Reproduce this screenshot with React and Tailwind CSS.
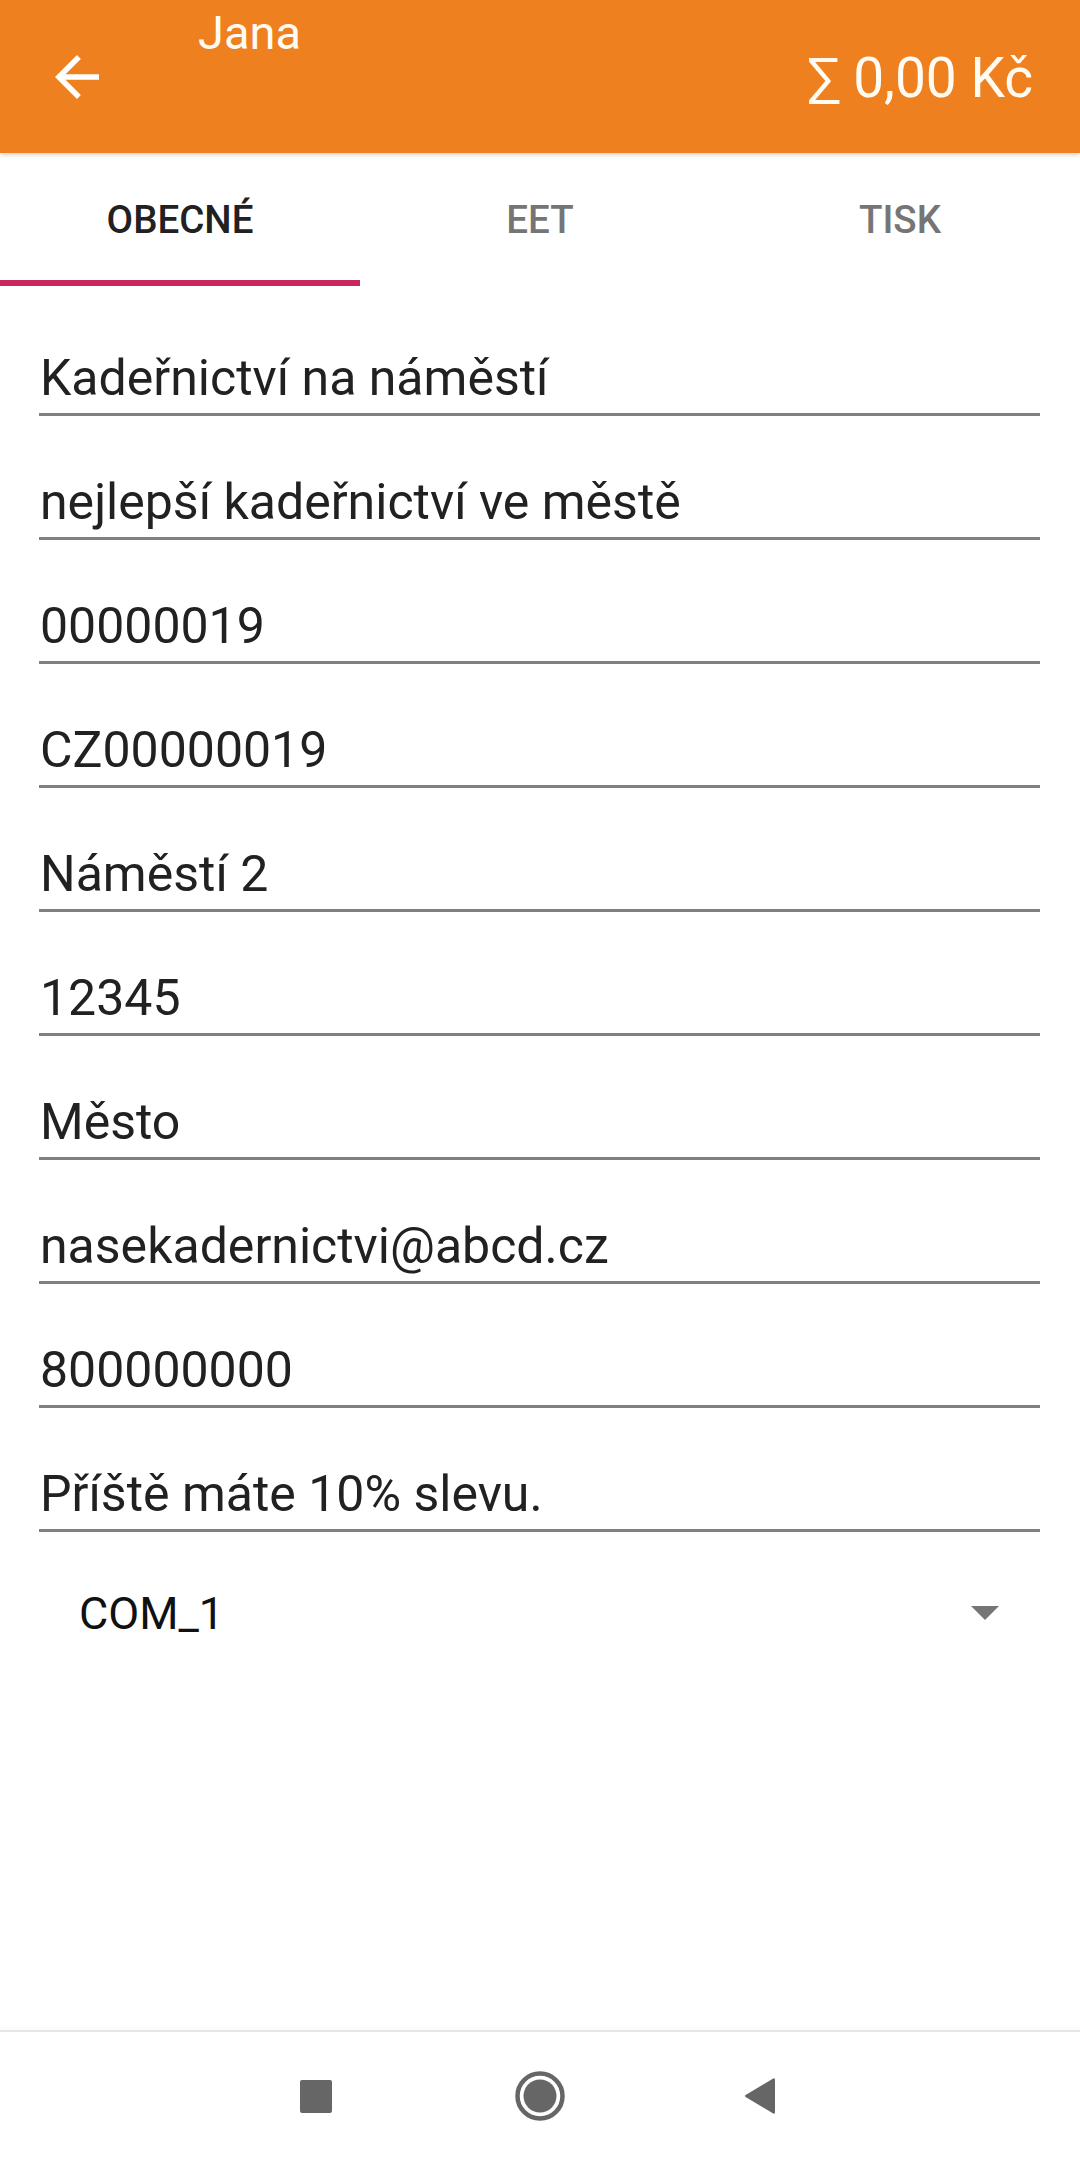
const fields = [
  'Kadeřnictví na náměstí',
  'nejlepší kadeřnictví ve městě',
  '00000019',
  'CZ00000019',
  'Náměstí 2',
  '12345',
  'Město',
  'nasekadernictvi@abcd.cz',
  '800000000',
  'Příště máte 10% slevu.',
]

const tabs = ['OBECNÉ', 'EET', 'TISK']

function Field({ value, first }) {
  return (
    <div className={`${first ? 'h-[130px]' : 'h-[124px]'} flex items-end border-b-[3px] border-[#808080]`}>
      <span className="pb-[5px] pl-[1px] text-[50px] leading-[60px] text-[#212121]">{value}</span>
    </div>
  )
}

export default function App() {
  return (
    <div className="flex h-[2160px] w-[1080px] flex-col bg-white font-['Roboto','Liberation_Sans',sans-serif]">
      {/* toolbar */}
      <header className="relative z-10 flex h-[153px] shrink-0 items-start bg-[#ee801f] pl-[44px] pr-[47px] text-white shadow-[0_2px_4px_rgba(0,0,0,0.18)]">
        <button type="button" className="mt-[44px] h-[66px] w-[66px]">
          <svg viewBox="0 0 24 24" className="h-[66px] w-[66px]" fill="white">
            <path d="M20 11H7.83l5.59-5.59L12 4l-8 8 8 8 1.41-1.41L7.83 13H20v-2z" />
          </svg>
        </button>
        <h1 className="ml-[88px] mt-[6px] text-[47px] leading-[54px] text-[#fffbf2]">Jana</h1>
        <div className="ml-auto mt-[46px] text-[55px] leading-[64px] text-[#fffbf2]">∑ 0,00 Kč</div>
      </header>

      {/* tabs */}
      <nav className="grid h-[133px] shrink-0 grid-cols-3">
        {tabs.map((t, i) => (
          <div key={t} className="relative flex items-center justify-center">
            <span className={`text-[38.5px] font-medium ${i === 0 ? 'text-[#212121]' : 'text-[#757575]'}`}>{t}</span>
            {i === 0 && <div className="absolute bottom-0 left-0 h-[6px] w-full bg-[#c9285d]" />}
          </div>
        ))}
      </nav>

      {/* form */}
      <div className="flex flex-col pl-[39px] pr-[40px]">
        {fields.map((f, i) => (
          <Field key={f} value={f} first={i === 0} />
        ))}
        <div className="flex items-center pl-[40px] pr-[41px] pt-[55px]">
          <span className="text-[45px] leading-[54px] text-[#111]">COM_1</span>
          <svg viewBox="0 0 28 14" className="ml-auto mt-[-2px] h-[14px] w-[28px]" fill="#757575">
            <path d="M0 0h28L14 14z" />
          </svg>
        </div>
      </div>

      <div className="flex-1" />

      {/* system navigation */}
      <div className="flex h-[130px] shrink-0 items-center justify-center border-t-2 border-[#e6e6e6] shadow-[0_-3px_4px_rgba(0,0,0,0.02)]">
        <div className="flex w-[224px] justify-center">
          <div className="h-[33px] w-[32px] rounded-[2px] bg-[#666]" />
        </div>
        <div className="flex w-[224px] justify-center">
          <svg viewBox="0 0 50 50" className="h-[50px] w-[50px]">
            <circle cx="25" cy="25" r="22.5" fill="none" stroke="#666" strokeWidth="4.5" />
            <circle cx="25" cy="25" r="16.5" fill="#666" />
          </svg>
        </div>
        <div className="flex w-[224px] justify-center">
          <svg viewBox="0 0 32 36" className="mr-[8px] h-[36px] w-[32px]" fill="#666">
            <path d="M31 1.5v33a1.2 1.2 0 0 1-1.8 1L1.6 19a1.2 1.2 0 0 1 0-2L29.2.5a1.2 1.2 0 0 1 1.8 1z" />
          </svg>
        </div>
      </div>
    </div>
  )
}
